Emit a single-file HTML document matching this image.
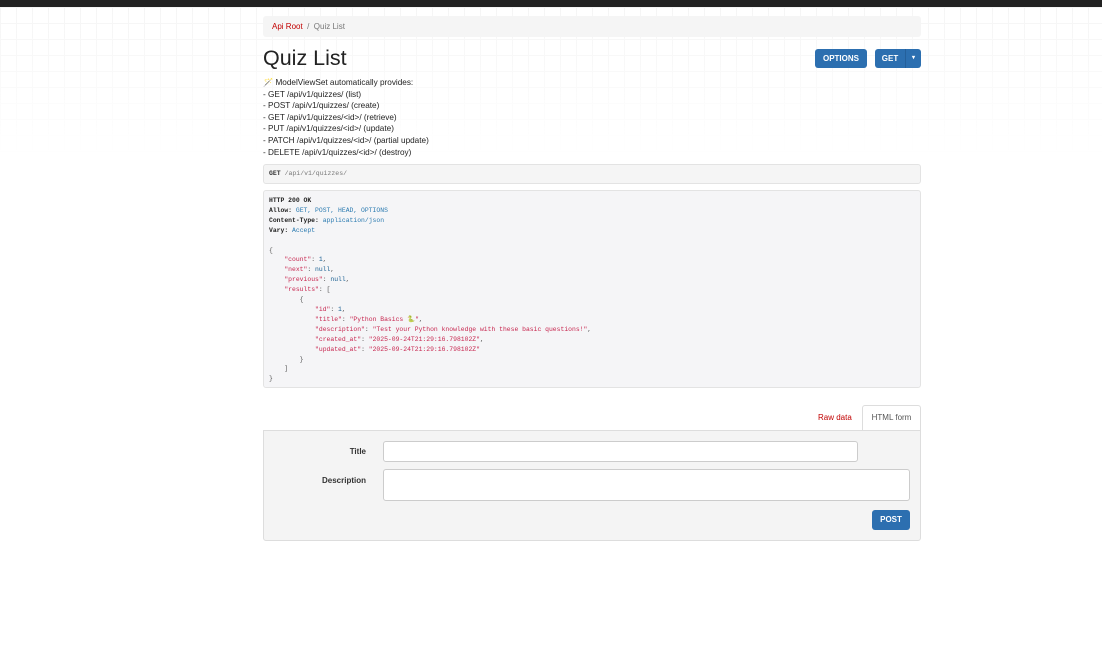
<!DOCTYPE html>
<html><head><meta charset="utf-8"><style>
*{box-sizing:border-box;margin:0;padding:0}
body{width:1102px;height:650px;overflow:hidden;background:#fff;font-family:"Liberation Sans",Arial,sans-serif;color:#333;position:relative}
.grid{position:absolute;left:0;top:7px;width:1102px;height:150px;
background-image:linear-gradient(#eee 1px,transparent 1px),linear-gradient(90deg,#eee 1px,transparent 1px);background-size:16px 16px;
-webkit-mask-image:linear-gradient(#000,transparent);mask-image:linear-gradient(#000,transparent);opacity:.6}
.top{position:absolute;left:0;top:0;width:1102px;height:7px;background:#222}
.a{position:absolute}
.bc{left:263px;top:16px;width:658px;height:21px;background:#f5f5f5;border-radius:3px;font-size:8px;line-height:21px;padding-left:9px;color:#777}
.bc b{color:#c20000;font-weight:normal}
h1{position:absolute;left:263px;top:46px;font-size:21.5px;font-weight:normal;color:#222}
.btn{position:absolute;background:#2c6fb0;color:#fff;font-size:8px;font-weight:bold;border-radius:3px;text-align:center;line-height:19px;height:19px}
.desc{left:263px;top:77px;font-size:8.2px;line-height:11.6px;color:#222}
.req{left:263px;top:164px;width:658px;height:20px;background:#f5f5f5;border:1px solid #e3e3e3;border-radius:3px;font-family:"Liberation Mono",monospace;font-size:6.5px;line-height:18px;padding-left:5px;color:#777}
.resp{left:263px;top:190px;width:658px;height:198px;background:#f5f5f7;border:1px solid #e3e3e3;border-radius:3px;font-family:"Liberation Mono",monospace;font-size:6.4px;line-height:9.9px;padding:5px 5px;white-space:pre;color:#555}
.k{color:#c7254e}.s{color:#c7254e}.n{color:#195f91}.v{color:#2a7ab0}.bk{color:#222;font-weight:bold}
.tab{font-size:8px}
.form{left:263px;top:430px;width:658px;height:111px;background:#f4f4f4;border:1px solid #ddd;border-radius:0 0 3px 3px}
.lbl{position:absolute;font-size:8px;font-weight:bold;color:#333;text-align:right}
.inp{position:absolute;background:#fff;border:1px solid #ccc;border-radius:3px}
</style></head><body>
<div class="grid"></div>
<div class="top"></div>
<div class="a bc"><b>Api Root</b> &nbsp;/&nbsp; Quiz List</div>
<h1>Quiz List</h1>
<div class="btn" style="left:815px;top:49px;width:52px">OPTIONS</div>
<div class="btn" style="left:875px;top:49px;width:30px;border-radius:3px 0 0 3px">GET</div>
<div class="btn" style="left:905px;top:49px;width:16px;border-left:1px solid #24609b;border-radius:0 3px 3px 0;font-size:6px">▾</div>
<div class="a desc">🪄 ModelViewSet automatically provides:<br>- GET /api/v1/quizzes/ (list)<br>- POST /api/v1/quizzes/ (create)<br>- GET /api/v1/quizzes/&lt;id&gt;/ (retrieve)<br>- PUT /api/v1/quizzes/&lt;id&gt;/ (update)<br>- PATCH /api/v1/quizzes/&lt;id&gt;/ (partial update)<br>- DELETE /api/v1/quizzes/&lt;id&gt;/ (destroy)</div>
<div class="a req"><b style="color:#333">GET</b> /api/v1/quizzes/</div>
<div class="a resp"><span class="bk">HTTP 200 OK</span>
<span class="bk">Allow:</span> <span class="v">GET, POST, HEAD, OPTIONS</span>
<span class="bk">Content-Type:</span> <span class="v">application/json</span>
<span class="bk">Vary:</span> <span class="v">Accept</span>

{
    <span class="k">"count"</span>: <span class="n">1</span>,
    <span class="k">"next"</span>: <span class="n">null</span>,
    <span class="k">"previous"</span>: <span class="n">null</span>,
    <span class="k">"results"</span>: [
        {
            <span class="k">"id"</span>: <span class="n">1</span>,
            <span class="k">"title"</span>: <span class="s">"Python Basics <span style="color:#2a9d5c">🐍</span>"</span>,
            <span class="k">"description"</span>: <span class="s">"Test your Python knowledge with these basic questions!"</span>,
            <span class="k">"created_at"</span>: <span class="s">"2025-09-24T21:29:16.798102Z"</span>,
            <span class="k">"updated_at"</span>: <span class="s">"2025-09-24T21:29:16.798102Z"</span>
        }
    ]
}</div>
<div class="a tab" style="left:818px;top:413px;color:#c20000">Raw data</div>
<div class="a tab" style="left:862px;top:405px;width:59px;height:26px;background:#fff;border:1px solid #ddd;border-bottom:none;border-radius:3px 3px 0 0;text-align:center;line-height:24px;color:#555">HTML form</div>
<div class="a form">
<div class="lbl" style="left:60px;top:16px;width:42px">Title</div>
<div class="inp" style="left:119px;top:10px;width:475px;height:21px"></div>
<div class="lbl" style="left:40px;top:45px;width:62px">Description</div>
<div class="inp" style="left:119px;top:38px;width:527px;height:32px"></div>
<div class="btn" style="left:608px;top:79px;width:38px;height:20px;line-height:20px">POST</div>
</div>
</body></html>
